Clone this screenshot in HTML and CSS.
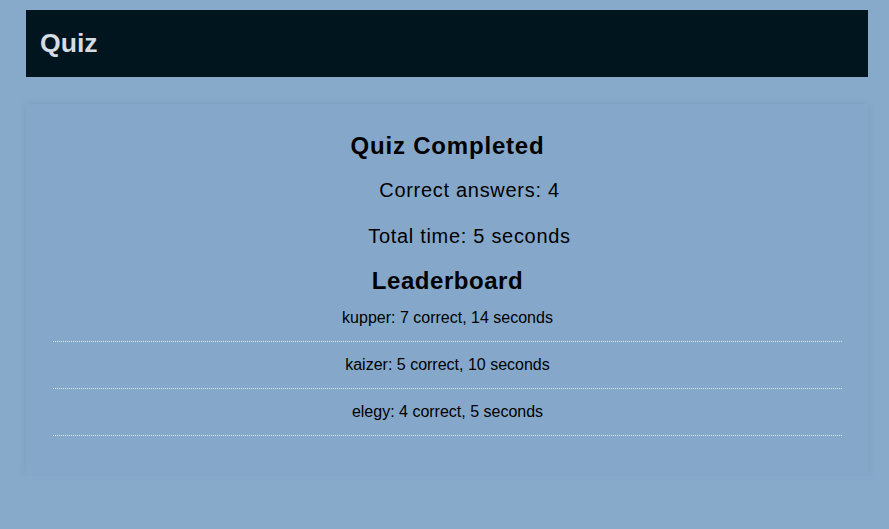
FILE: index.html
```html
<!DOCTYPE html>
<html>
<head>
<meta charset="utf-8">
<title>Quiz</title>
<link rel="stylesheet" href="styles.css">
</head>
<body>
<header class="app-header">
  <h1 class="app-title">Quiz</h1>
</header>
<main class="card">
  <h2 class="result-title">Quiz Completed</h2>
  <p class="stat stat-first">Correct answers: 4</p>
  <p class="stat stat-second">Total time: 5 seconds</p>
  <h3 class="board-title">Leaderboard</h3>
  <ul class="board">
    <li class="board-row">kupper: 7 correct, 14 seconds</li>
    <li class="board-row">kaizer: 5 correct, 10 seconds</li>
    <li class="board-row">elegy: 4 correct, 5 seconds</li>
  </ul>
</main>
</body>
</html>
```
FILE: styles.css
```css
html {
  background: #87aacb;
}
body {
  margin: 0;
  padding: 10px 21px 0 26px;
  font-family: "Liberation Sans", Arial, sans-serif;
  color: #000;
  background: #87aacb;
}
.app-header {
  height: 67px;
  background: #01151f;
  display: flex;
  align-items: center;
  padding-left: 14px;
  box-sizing: border-box;
}
.app-title {
  margin: 0;
  font-size: 26.6px;
  line-height: 30px;
  font-weight: bold;
  color: #d5dce3;
  position: relative;
  top: -1px;
}
.card {
  display: block;
  margin-top: 27px;
  background: #85a8ca;
  box-shadow: 0 0 8px rgba(0, 0, 0, 0.08);
  padding: 28px 26px 40px 27px;
  text-align: center;
}
.result-title {
  margin: 0;
  font-size: 24px;
  line-height: 28px;
  font-weight: bold;
  letter-spacing: 0.8px;
}
.stat {
  margin: 0;
  font-size: 20px;
  line-height: 24px;
  padding-left: 44px;
  letter-spacing: 0.7px;
}
.stat-first {
  margin-top: 18px;
}
.stat-second {
  margin-top: 22px;
}
.board-title {
  margin: 19px 0 0;
  font-size: 24px;
  line-height: 28px;
  font-weight: bold;
  letter-spacing: 0.55px;
}
.board {
  list-style: none;
  margin: 0;
  padding: 0;
}
.board-row {
  font-size: 16px;
  line-height: 18px;
  padding: 14px 0;
  border-bottom: 1px dotted #dfe7ef;
}
```
